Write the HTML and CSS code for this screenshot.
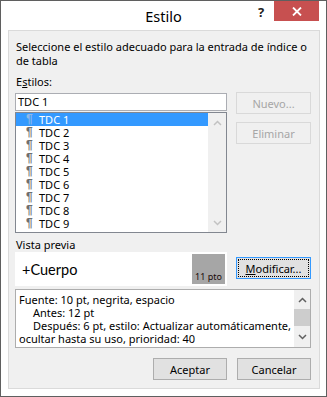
FILE: index.html
```html
<!DOCTYPE html>
<html lang="es">
<head>
<meta charset="utf-8">
<title>Estilo</title>
<link rel="stylesheet" href="styles.css">
</head>
<body>
<div class="window">
  <div class="titlebar">
    <div class="title">Estilo</div>
    <div class="controls">
      <div class="help">?</div>
      <div class="close">
        <svg width="10" height="9" viewBox="0 0 10 9"><path d="M1 0.5 L9 8.5 M9 0.5 L1 8.5" stroke="#fff" stroke-width="1.8" fill="none"/></svg>
      </div>
    </div>
  </div>
  <div class="panel">
    <p class="intro">Seleccione el estilo adecuado para la entrada de índice o<br>de tabla</p>
    <div class="label label-styles">E<span class="ak">s</span>tilos:</div>
    <div class="styles-row">
      <div class="left-col">
        <div class="textbox">TDC 1</div>
        <div class="listbox">
          <ul class="items">
            <li class="item sel"><span class="pil">¶</span><span class="name">TDC 1</span></li>
            <li class="item"><span class="pil">¶</span><span class="name">TDC 2</span></li>
            <li class="item"><span class="pil">¶</span><span class="name">TDC 3</span></li>
            <li class="item"><span class="pil">¶</span><span class="name">TDC 4</span></li>
            <li class="item"><span class="pil">¶</span><span class="name">TDC 5</span></li>
            <li class="item"><span class="pil">¶</span><span class="name">TDC 6</span></li>
            <li class="item"><span class="pil">¶</span><span class="name">TDC 7</span></li>
            <li class="item"><span class="pil">¶</span><span class="name">TDC 8</span></li>
            <li class="item"><span class="pil">¶</span><span class="name">TDC 9</span></li>
          </ul>
          <div class="vscroll">
            <div class="arrow-up"><svg width="9" height="6" viewBox="0 0 9 6"><polyline points="1,5 4.5,1.5 8,5" fill="none" stroke="#c2c2c2" stroke-width="1.5"/></svg></div>
            <div class="arrow-down"><svg width="9" height="6" viewBox="0 0 9 6"><polyline points="1,1 4.5,4.5 8,1" fill="none" stroke="#c2c2c2" stroke-width="1.5"/></svg></div>
          </div>
        </div>
      </div>
      <div class="side">
        <button class="btn disabled">Nuevo...</button>
        <button class="btn disabled">Eliminar</button>
      </div>
    </div>
    <div class="label label-preview">Vista previa</div>
    <div class="preview-row">
      <div class="preview">
        <div class="pv-text">+Cuerpo</div>
        <div class="pv-size">11 pto</div>
      </div>
      <button class="btn default"><span class="focus-rect"><span class="ak">M</span>odificar...</span></button>
    </div>
    <div class="desc">
      <div class="desc-text">
        <div>Fuente: 10 pt, negrita, espacio</div>
        <div class="ind">Antes: 12 pt</div>
        <div class="ind">Después: 6 pt, estilo: Actualizar automáticamente,</div>
        <div>ocultar hasta su uso, prioridad: 40</div>
      </div>
      <div class="desc-scroll">
        <div class="ds-up"><svg width="9" height="6" viewBox="0 0 9 6"><polyline points="1,5 4.5,1.5 8,5" fill="none" stroke="#606060" stroke-width="1.5"/></svg></div>
        <div class="ds-thumb"></div>
        <div class="ds-down"><svg width="9" height="6" viewBox="0 0 9 6"><polyline points="1,1 4.5,4.5 8,1" fill="none" stroke="#606060" stroke-width="1.5"/></svg></div>
      </div>
    </div>
    <div class="actions">
      <button class="btn act">Aceptar</button>
      <button class="btn act">Cancelar</button>
    </div>
  </div>
</div>
</body>
</html>
```

FILE: styles.css
```css
html, body {
  margin: 0;
  padding: 0;
  background: #fff;
}
body {
  font-family: "Noto Sans", "Open Sans", sans-serif;
  font-size: 11px;
  color: #000;
}
.window {
  width: 327px;
  height: 397px;
  box-sizing: border-box;
  border: 1px solid #5f5f5f;
  background: #fff;
  display: flex;
  flex-direction: column;
}
.titlebar {
  height: 29px;
  flex: none;
  display: grid;
}
.title {
  grid-area: 1 / 1;
  justify-self: center;
  align-self: center;
  font-size: 14.5px;
  line-height: 20px;
  margin-top: 1px;
}
.controls {
  grid-area: 1 / 1;
  justify-self: end;
  align-self: start;
  display: flex;
  margin-right: 7px;
}
.help {
  width: 26px;
  height: 22px;
  line-height: 22px;
  text-align: center;
  font-weight: 700;
  font-size: 13px;
  color: #222;
}
.close {
  width: 45px;
  height: 20px;
  background: #c75050;
  display: flex;
  align-items: center;
  justify-content: center;
}
.panel {
  flex: 1;
  margin: 0 6px 7px 7px;
  border: 1px solid #dadada;
  background: #f0f0f0;
  padding: 9px 8px 8px 6px;
  display: flex;
  flex-direction: column;
}
.intro {
  margin: 0;
  line-height: 14px;
  padding-left: 1px;
  white-space: nowrap;
}
.label {
  line-height: 14px;
  padding-left: 1px;
}
.label-styles {
  margin-top: 7px;
  margin-bottom: 3px;
}
.label-preview {
  margin-top: 5px;
}
.ak {
  text-decoration: underline;
}
.styles-row,
.preview-row {
  display: grid;
  grid-template-columns: 212px 75px;
  column-gap: 9px;
  align-items: start;
}
.left-col {
  display: flex;
  flex-direction: column;
  gap: 1px;
  padding-top: 1px;
}
.textbox {
  height: 18px;
  box-sizing: border-box;
  border: 1px solid #abadb3;
  background: #fff;
  padding-left: 2px;
  line-height: 16px;
}
.listbox {
  height: 121px;
  box-sizing: border-box;
  border: 1px solid #828790;
  background: #fff;
  display: flex;
}
.items {
  list-style: none;
  margin: 0;
  padding: 0;
  width: 192px;
}
.item {
  height: 13px;
  padding-left: 10px;
  display: flex;
  align-items: center;
  overflow: hidden;
}
.pil {
  width: 13px;
  height: 13px;
  line-height: 13px;
  font-family: "Liberation Sans", sans-serif;
  font-size: 12px;
  font-weight: 700;
  color: #6f6f6f;
}
.name {
  line-height: 13px;
}
.item.sel {
  background: #3399ff;
  color: #fff;
}
.item.sel .pil {
  color: #8fb8e6;
}
.vscroll {
  width: 18px;
  background: #f0f0f0;
  display: flex;
  flex-direction: column;
  justify-content: space-between;
}
.arrow-up,
.arrow-down {
  display: flex;
  align-items: center;
  justify-content: center;
}
.arrow-up { height: 20px; }
.arrow-down { height: 18px; }
.side {
  display: flex;
  flex-direction: column;
  gap: 8px;
}
.btn {
  width: 75px;
  height: 22px;
  box-sizing: border-box;
  border: 1px solid #adadad;
  background: #e1e1e1;
  font-family: "Noto Sans", "Open Sans", sans-serif;
  font-size: 11px;
  color: #000;
  padding: 0;
  margin: 0;
}
.btn.disabled {
  background: #f0f0f0;
  border-color: #d9d9d9;
  color: #a6a6a6;
}
.btn.default {
  border-color: #3399ff;
  padding: 1px;
  margin-top: 5px;
}
.focus-rect {
  display: flex;
  align-items: center;
  justify-content: center;
  height: 100%;
  box-sizing: border-box;
  border: 1px dotted #000;
}
.preview {
  height: 34px;
  box-sizing: border-box;
  border: 2px solid #fff;
  background: #fff;
  display: flex;
}
.pv-text {
  flex: 1;
  padding-left: 5px;
  display: flex;
  align-items: center;
  font-family: Lato, "Noto Sans", sans-serif;
  font-size: 14.5px;
}
.pv-size {
  width: 33px;
  background: #a6a6a6;
  display: flex;
  align-items: flex-end;
  justify-content: center;
  font-size: 9px;
  line-height: 11px;
  padding-bottom: 2px;
  box-sizing: border-box;
  color: #1a0a0a;
}
.desc {
  margin-top: 3px;
  height: 59px;
  box-sizing: border-box;
  border: 1px solid #adadad;
  background: #fff;
  display: flex;
}
.desc-text {
  flex: 1;
  padding: 3px 0 0 3px;
  line-height: 13px;
  white-space: nowrap;
  overflow: hidden;
}
.ind {
  padding-left: 14px;
}
.desc-scroll {
  width: 16px;
  background: #f0f0f0;
  display: flex;
  flex-direction: column;
}
.ds-up,
.ds-down {
  display: flex;
  align-items: center;
  justify-content: center;
}
.ds-up { height: 19px; }
.ds-thumb {
  height: 17px;
  background: #cdcdcd;
}
.ds-down { flex: 1; }
.actions {
  margin-top: 10px;
  display: flex;
  justify-content: flex-end;
  gap: 10px;
}
.btn.act {
  width: 74px;
}
```
